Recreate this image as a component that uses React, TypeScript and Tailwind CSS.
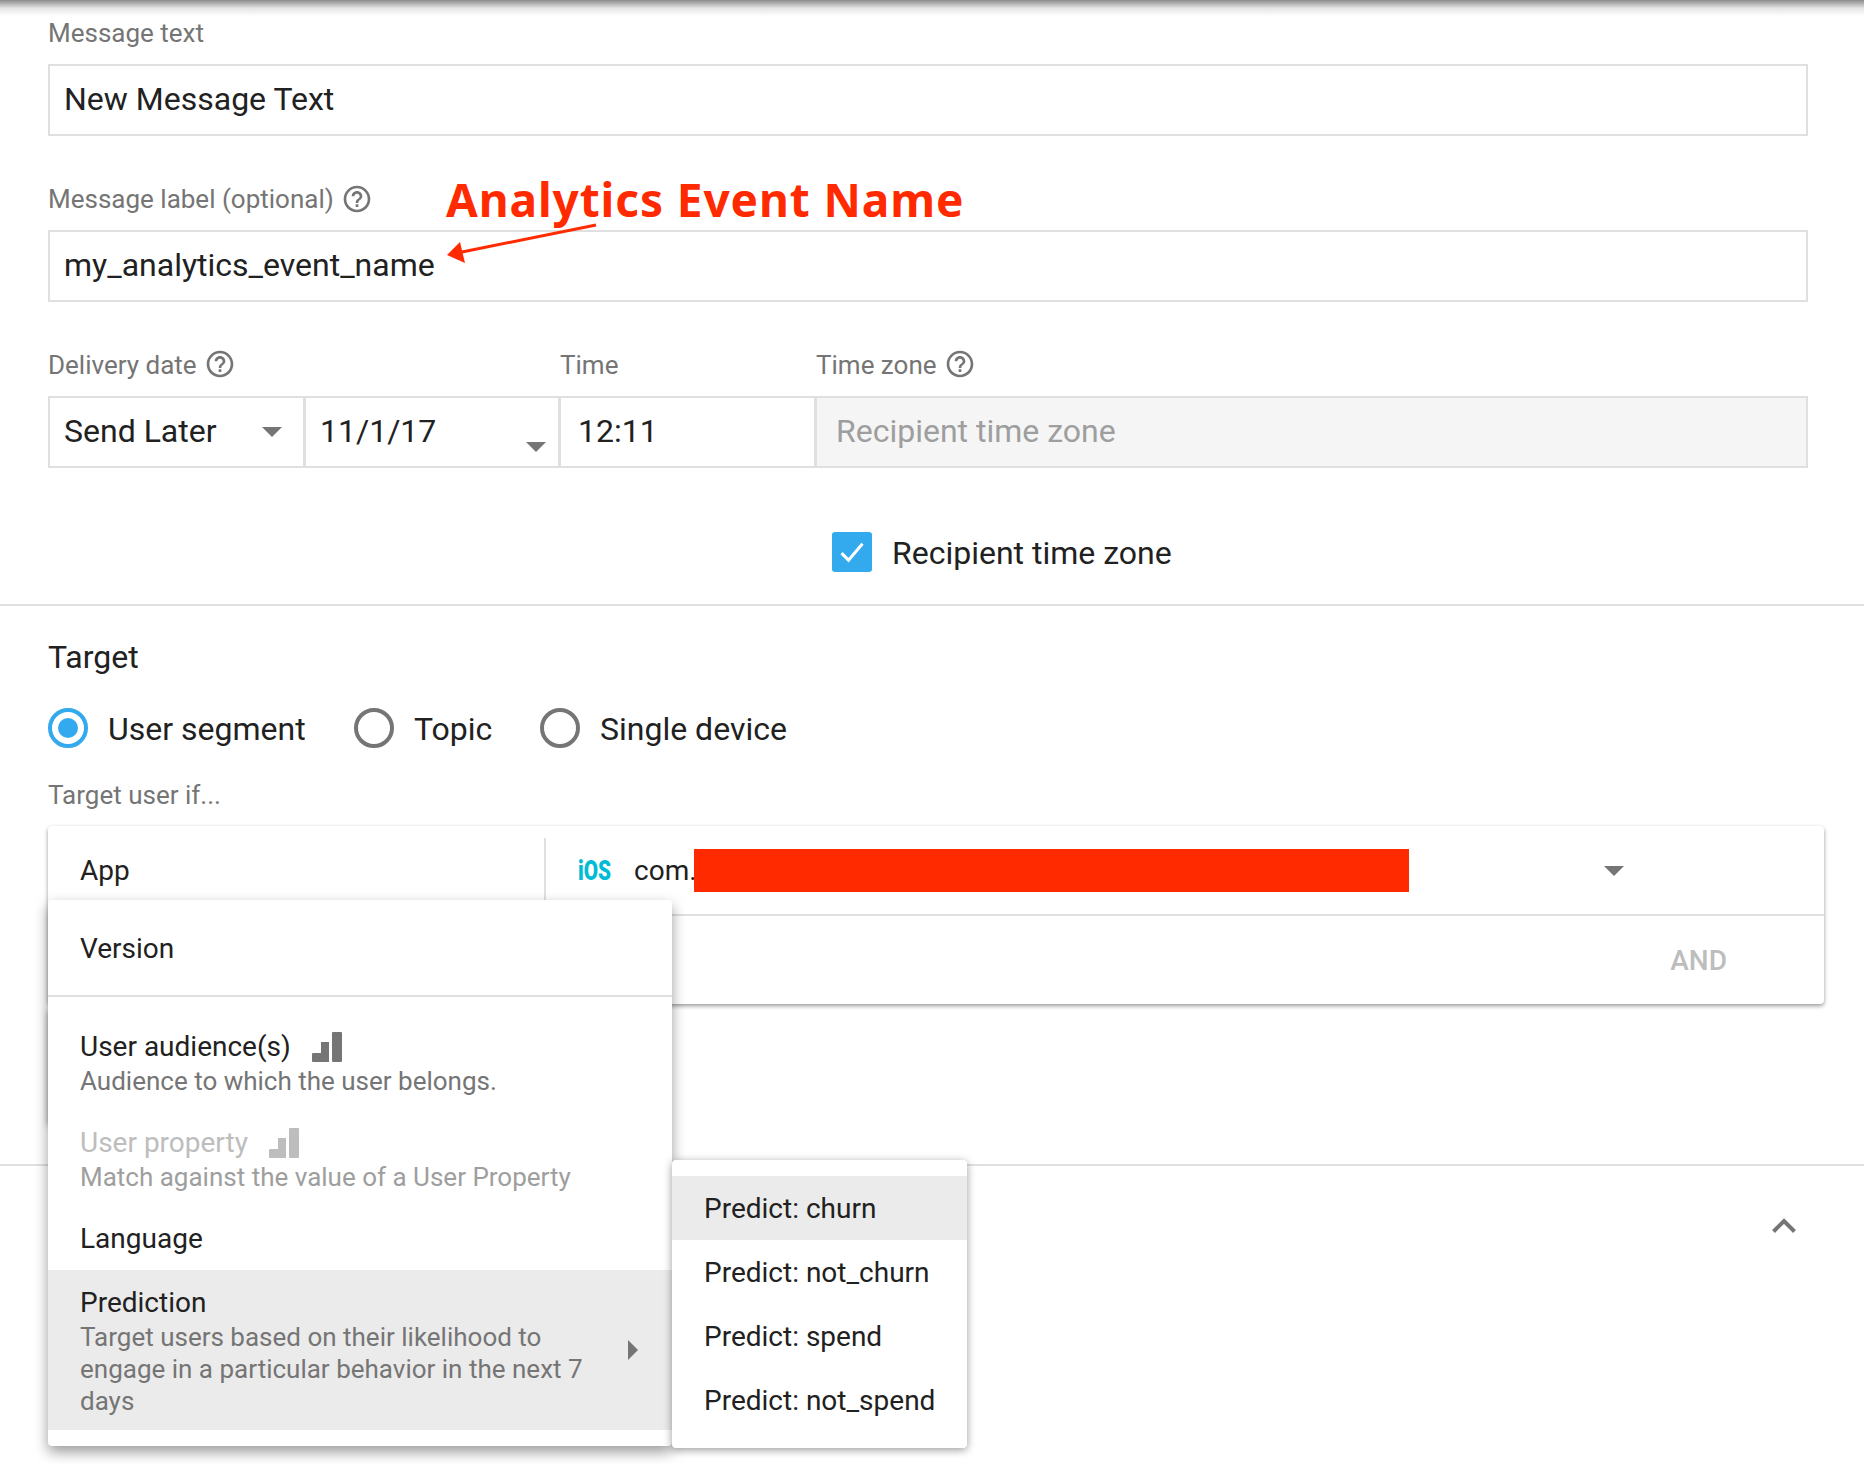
const HELP =
  "M11 18h2v-2h-2v2zm1-16C6.48 2 2 6.48 2 12s4.48 10 10 10 10-4.48 10-10S17.52 2 12 2zm0 18c-4.41 0-8-3.59-8-8s3.59-8 8-8 8 3.59 8 8-3.59 8-8 8zm0-14c-2.21 0-4 1.79-4 4h2c0-1.1.9-2 2-2s2 .9 2 2c0 2-3 1.75-3 5h2c0-2.25 3-2.5 3-5 0-2.21-1.79-4-4-4z";

function HelpIcon() {
  return (
    <svg viewBox="0 0 24 24" className="w-8 h-8 -mt-[1px] fill-[#757575] shrink-0">
      <path d={HELP} />
    </svg>
  );
}

function Caret({ className = "" }: { className?: string }) {
  return (
    <svg viewBox="0 0 20 10" className={`w-5 h-2.5 fill-[#757575] shrink-0 ${className}`}>
      <path d="M0 0h20L10 10z" />
    </svg>
  );
}

function BarsIcon({ className = "" }: { className?: string }) {
  return (
    <svg viewBox="0 0 30 30" className={`w-[30px] h-[30px] shrink-0 ${className}`}>
      <path d="M1 21h8v9H1a1 1 0 0 1-1-1v-7a1 1 0 0 1 1-1zM9 10h8v20H9zM20 1a1 1 0 0 1 1-1h8a1 1 0 0 1 1 1v28a1 1 0 0 1-1 1h-8a1 1 0 0 1-1-1z" />
    </svg>
  );
}

function Radio({ label, checked, width }: { label: string; checked?: boolean; width: string }) {
  return (
    <div className={`flex items-center gap-5 ${width}`}>
      {checked ? (
        <span className="w-10 h-10 rounded-full border-4 border-[#33a9ee] flex items-center justify-center">
          <span className="w-5 h-5 rounded-full bg-[#33a9ee]" />
        </span>
      ) : (
        <span className="w-10 h-10 rounded-full border-4 border-[#757575]" />
      )}
      <span className="h-10 text-[32px] leading-[42px] text-[#212121]">{label}</span>
    </div>
  );
}

const predictions = ["Predict: churn", "Predict: not_churn", "Predict: spend", "Predict: not_spend"];

export default function App() {
  return (
    <div className="relative w-[1864px] h-[1464px] overflow-hidden bg-white font-['Roboto',sans-serif] text-[#212121]">
      <div className="absolute top-0 left-0 right-0 h-4 bg-gradient-to-b from-[#8c8c8c] via-[#e4e4e4] to-transparent" />

      <div className="pl-12 pr-14">
        <div className="h-16 pt-[17px] text-[26px] leading-8 text-[#757575]">Message text</div>
        <div className="h-[72px] border-2 border-[#e0e0e0] flex items-center pl-[14px] pb-[2px] text-[32px]">New Message Text</div>

        <div className="mt-12 h-[46px] flex items-start gap-[7px] text-[26px] leading-[30px] text-[#757575]">
          Message label (optional)
          <HelpIcon />
        </div>
        <div className="h-[72px] border-2 border-[#e0e0e0] flex items-center pl-[14px] pb-[2px] text-[32px]">my_analytics_event_name</div>

        <div className="mt-[47px] h-[47px] flex items-start text-[26px] leading-8 text-[#757575]">
          <div className="w-[512px] flex items-start gap-[7px]">
            Delivery date
            <HelpIcon />
          </div>
          <div className="w-[256px]">Time</div>
          <div className="flex items-start gap-[7px]">
            Time zone
            <HelpIcon />
          </div>
        </div>
        <div className="h-[72px] flex text-[32px] border-y-2 border-[#e0e0e0]">
          <div className="w-[255px] border-l-2 border-[#e0e0e0] flex items-center justify-between pl-[14px] pr-[21px]">
            <span className="pb-[2px]">Send Later</span>
            <Caret />
          </div>
          <div className="w-[255px] border-l-[3px] border-[#e0e0e0] flex items-center justify-between pl-[14px] pr-3">
            <span className="pb-[2px]">11/1/17</span>
            <Caret className="mt-[30px]" />
          </div>
          <div className="w-[256px] border-l-[3px] border-[#e0e0e0] flex items-center pl-[17px] pb-[2px]">12:11</div>
          <div className="flex-1 border-l-[3px] border-r-2 border-[#e0e0e0] bg-[#f5f5f5] flex items-center pl-[19px] pb-[2px] text-[#9e9e9e]">
            Recipient time zone
          </div>
        </div>

        <div className="mt-16 ml-[784px] h-10 flex items-center gap-5">
          <span className="w-10 h-10 rounded-[3px] bg-[#33a9ee] flex items-center justify-center">
            <svg viewBox="0 0 24 24" className="w-7 h-7 fill-none stroke-white stroke-[2.6]">
              <path d="M3 13l6 6L21 5" />
            </svg>
          </span>
          <span className="h-10 text-[32px] leading-[42px]">Recipient time zone</span>
        </div>
      </div>

      <div className="mt-8 border-t-2 border-[#e0e0e0]" />

      <div className="px-12">
        <div className="mt-[31px] text-[32px] leading-10">Target</div>
        <div className="mt-[31px] flex">
          <Radio label="User segment" checked width="w-[306px]" />
          <Radio label="Topic" width="w-[186px]" />
          <Radio label="Single device" width="w-[400px]" />
        </div>
        <div className="mt-[31px] text-[26px] leading-8 text-[#757575]">Target user if...</div>

        <div className="mt-[15px] w-[1776px] h-[178px] rounded bg-white shadow-[0_2px_4px_rgba(0,0,0,0.4)]">
          <div className="h-[90px] border-b-2 border-[#e0e0e0] flex items-center text-[28px]">
            <div className="w-[496px] pl-8 pt-[2px]">App</div>
            <div className="self-end h-[76px] w-[2px] bg-[#e0e0e0]" />
            <div className="ml-8 w-[57px] h-[30px] leading-[32px] text-[#00bcd4] font-black text-[28px] origin-left scale-x-[0.74]">iOS</div>
            <div className="pt-[2px] -ml-[1px]">com.</div>
            <div className="-ml-[3px] w-[715px] h-[43px] bg-[#ff2a00]" />
            <Caret className="ml-[195px] mt-[2px]" />
          </div>
          <div className="h-[88px] pt-[2px] flex items-center justify-end pr-[97px] text-[28px] font-medium text-[#bdbdbd]">AND</div>
        </div>

        <div className="mt-1 w-[400px] h-[116px] rounded shadow-[0_2px_6px_rgba(0,0,0,0.4)]" />
      </div>

      <div className="mt-10 border-t-2 border-[#e0e0e0]" />
      <div className="mt-[52px] flex justify-end pr-[68px]">
        <svg viewBox="0 0 24 15" className="w-6 h-[15px] fill-none stroke-[#757575] stroke-[4]">
          <path d="M1.5 13.5L12 3l10.5 10.5" />
        </svg>
      </div>

      <div className="absolute left-12 top-[900px] w-[624px] h-[546px] rounded bg-white shadow-[0_6px_14px_rgba(0,0,0,0.4)]">
        <div className="h-[97px] border-b-2 border-[#e0e0e0] pl-8 pt-[33px] text-[28px] leading-8">Version</div>
        <div className="pt-[33px] leading-8">
          <div className="px-8 h-[34px] flex items-center gap-[21px] text-[28px]">
            User audience(s)
            <BarsIcon className="fill-[#757575]" />
          </div>
          <div className="mt-[1px] px-8 text-[26px] text-[#757575]">Audience to which the user belongs.</div>
          <div className="mt-[29px] px-8 h-[34px] flex items-center gap-[21px] text-[28px] text-[#bdbdbd]">
            User property
            <BarsIcon className="fill-[#bdbdbd]" />
          </div>
          <div className="mt-[1px] px-8 text-[26px] text-[#9e9e9e]">Match against the value of a User Property</div>
          <div className="mt-[30px] px-8 text-[28px]">Language</div>
          <div className="mt-[15px] h-[160px] bg-[#ebebeb] pl-8 flex items-center">
            <div className="w-[516px] pt-1">
              <div className="h-[34px] text-[28px]">Prediction</div>
              <div className="text-[26px] text-[#757575]">
                Target users based on their likelihood to engage in a particular behavior in the next 7 days
              </div>
            </div>
            <svg viewBox="0 0 10 20" className="ml-[32px] w-2.5 h-5 fill-[#757575]">
              <path d="M0 0l10 10L0 20z" />
            </svg>
          </div>
        </div>
      </div>

      <div className="absolute left-[672px] top-[1160px] w-[295px] h-[288px] pt-4 rounded bg-white shadow-[0_2px_8px_rgba(0,0,0,0.4)]">
        {predictions.map((p, i) => (
          <div key={p} className={`h-16 pl-8 pt-[2px] flex items-center text-[28px] ${i === 0 ? "bg-[#ebebeb]" : ""}`}>
            {p}
          </div>
        ))}
      </div>

      <div className="absolute left-[446px] top-[169px] font-['Noto_Sans',sans-serif] text-[46px] leading-[60px] font-bold text-[#ff2a00] tracking-[0.9px]">
        Analytics Event Name
      </div>
      <svg className="absolute left-[440px] top-[220px] w-[160px] h-[46px]" viewBox="0 0 160 46">
        <path d="M156 5L22 32" className="fill-none stroke-[#ff2a00] stroke-[3]" />
        <path d="M7 35L20 22l5 21z" className="fill-[#ff2a00]" />
      </svg>
    </div>
  );
}
